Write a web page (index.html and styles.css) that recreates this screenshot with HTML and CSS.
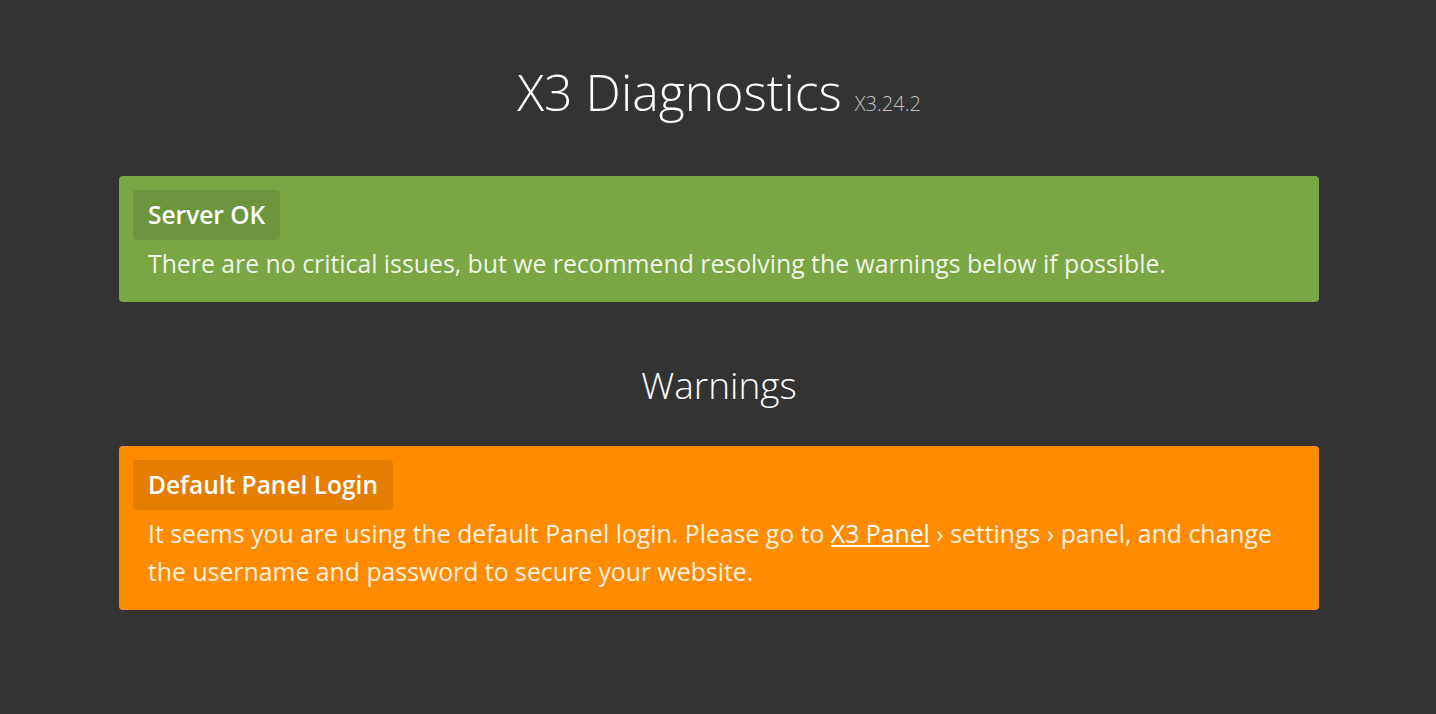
FILE: index.html
```html
<!DOCTYPE html>
<html>
<head>
<meta charset="UTF-8"/>
<meta name="viewport" content="width=device-width, initial-scale=1.0">
<title>X3 Diagnostics</title>
<link rel="stylesheet" href="styles.css">
</head>
<body>
<div class="page">
<h1 class="title">X3 Diagnostics <small>X3.24.2</small></h1>

<div class="alert alert-ok">
<div class="alert-title">Server OK</div>
<p>There are no critical issues, but we recommend resolving the warnings below if possible.</p>
</div>

<h2 class="section">Warnings</h2>

<div class="alert alert-warn">
<div class="alert-title">Default Panel Login</div>
<p>It seems you are using the default Panel login. Please go to <a href="#">X3 Panel</a> › settings › panel, and change the username and password to secure your website.</p>
</div>
</div>
</body>
</html>
```

FILE: styles.css
```css
html {
    background: #333;
}
body {
    margin: 0;
    padding-left: 2px;
    color: #fff;
    font-family: "Open Sans", Lato, sans-serif;
}
.page {
    max-width: 1200px;
    margin: 0 auto;
    padding: 58px 0 40px;
}
.title {
    margin: 0 0 38px;
    text-align: center;
    font-weight: 300;
    font-size: 50px;
    line-height: 68px;
}
.title small {
    font-size: 20px;
    color: #c4c4c4;
}
.section {
    margin: 57px 0 35px;
    text-align: center;
    font-weight: 300;
    font-size: 37px;
    line-height: 52px;
}
.alert {
    border-radius: 4px;
    padding: 14px 14px 20px;
}
.alert-ok {
    background: #79a744;
}
.alert-warn {
    background: #ff8c00;
}
.alert-title {
    display: inline-block;
    padding: 0 15px;
    border-radius: 4px;
    background: rgba(0, 0, 0, 0.1);
    font-weight: 600;
    font-size: 24.5px;
    line-height: 50px;
}
.alert p {
    margin: 4px 15px 0;
    font-size: 24.8px;
    line-height: 38px;
    color: rgba(255, 255, 255, 0.9);
}
.alert a {
    color: #fff;
}
```
